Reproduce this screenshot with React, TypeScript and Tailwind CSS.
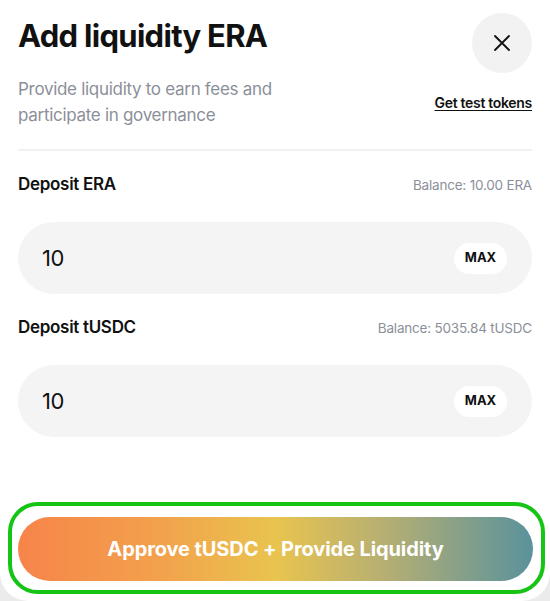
import React from "react";

function DepositField({ label, balance, value }: { label: string; balance: string; value: string }) {
  return (
    <div className="flex flex-col">
      <div className="flex h-[24px] items-center justify-between">
        <span className="text-[17px] font-semibold tracking-[-0.3px] text-[#111111]">{label}</span>
        <span className="text-[13.5px] tracking-[-0.2px] text-[#8b8f99]">{balance}</span>
      </div>
      <div className="mt-[25px] flex h-[72px] items-center justify-between rounded-full bg-[#f4f4f4] pl-[24px] pr-[25px]">
        <span className="text-[22px] tracking-[-0.5px] text-[#111111]">{value}</span>
        <span className="flex h-[31px] w-[53px] items-center justify-center rounded-full bg-white text-[13px] font-bold text-[#111111]">
          MAX
        </span>
      </div>
    </div>
  );
}

export default function App() {
  return (
    <div className="h-[601px] w-[550px] bg-[#ebebeb]" style={{ fontFamily: "Inter, 'Noto Sans', sans-serif" }}>
      <div className="flex h-[601px] w-[550px] flex-col rounded-b-[28px] bg-white">
        <div className="flex items-start justify-between pl-[18px] pr-[18px] pt-[13px]">
          <h1 className="mt-[4px] text-[31px] font-bold leading-[38px] tracking-[-0.7px] text-[#111111]">Add liquidity ERA</h1>
          <button className="flex h-[60px] w-[60px] items-center justify-center rounded-full bg-[#f2f2f2]">
            <svg width="24" height="24" viewBox="0 0 24 24" fill="none" stroke="#111111" strokeWidth="1.8" strokeLinecap="round">
              <path d="M5 5L19 19M19 5L5 19" />
            </svg>
          </button>
        </div>
        <div className="mt-[3px] flex items-center justify-between px-[18px]">
          <p className="max-w-[270px] text-[17px] leading-[26px] tracking-[-0.3px] text-[#8b8f99]">
            Provide liquidity to earn fees and participate in governance
          </p>
          <a className="text-[14px] font-semibold tracking-[-0.3px] text-[#111111] underline underline-offset-2">Get test tokens</a>
        </div>
        <div className="mx-[18px] mt-[21px] h-[2px] bg-[#f1f1f1]" />
        <div className="mt-[22px] flex flex-col gap-[22px] px-[18px]">
          <DepositField label="Deposit ERA" balance="Balance: 10.00 ERA" value="10" />
          <DepositField label="Deposit tUSDC" balance="Balance: 5035.84 tUSDC" value="10" />
        </div>
        <div className="ml-[8px] mr-[5px] mt-[65px] rounded-[30px] border-[4px] border-[#16c416] pb-[9px] pl-[6px] pr-[8px] pt-[11px]">
          <button className="flex h-[64px] w-full items-center justify-center rounded-full bg-[linear-gradient(90deg,#f7844a_0%,#f2a24c_28%,#e9c44f_50%,#b4ae74_72%,#5a929c_100%)] text-[20px] font-bold tracking-[-0.1px] text-white">
            Approve tUSDC + Provide Liquidity
          </button>
        </div>
      </div>
    </div>
  );
}
